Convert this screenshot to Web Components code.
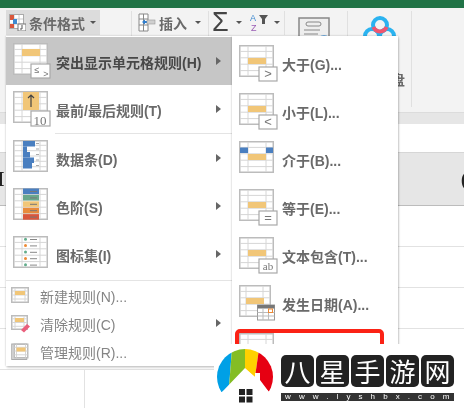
<!DOCTYPE html>
<html lang="zh">
<head>
<meta charset="utf-8">
<title>条件格式</title>
<style>
  html, body { margin: 0; padding: 0; background: #fff; overflow: hidden; }
  body { width: 464px; height: 408px; font-family: "Liberation Sans", "Noto Sans CJK SC", sans-serif; }
  x-menu.main { position: absolute; left: 6px; top: 36px; width: 226px; height: 330px; }
  x-menu.sub { position: absolute; left: 232px; top: 36px; width: 166px; height: 372px; padding-top: 3px; }
</style>
</head>
<body>
<x-app>
  <x-ribbon></x-ribbon>
  <x-sheet></x-sheet>
  <x-menu class="main">
    <x-menu-item active arrow><x-rule-icon slot="icon" kind="highlight"></x-rule-icon>突出显示单元格规则(H)</x-menu-item>
    <x-menu-item arrow><x-rule-icon slot="icon" kind="top"></x-rule-icon>最前/最后规则(T)</x-menu-item>
    <x-menu-sep></x-menu-sep>
    <x-menu-item arrow><x-rule-icon slot="icon" kind="bars"></x-rule-icon>数据条(D)</x-menu-item>
    <x-menu-item arrow><x-rule-icon slot="icon" kind="scale"></x-rule-icon>色阶(S)</x-menu-item>
    <x-menu-item arrow><x-rule-icon slot="icon" kind="dots"></x-rule-icon>图标集(I)</x-menu-item>
    <x-menu-sep wide></x-menu-sep>
    <x-menu-item small><x-rule-icon slot="icon" kind="new"></x-rule-icon>新建规则(N)...</x-menu-item>
    <x-menu-item small arrow><x-rule-icon slot="icon" kind="clear"></x-rule-icon>清除规则(C)</x-menu-item>
    <x-menu-item small><x-rule-icon slot="icon" kind="manage"></x-rule-icon>管理规则(R)...</x-menu-item>
  </x-menu>
  <x-menu class="sub">
    <x-menu-item sub><x-rule-icon slot="icon" kind="gt"></x-rule-icon>大于(G)...</x-menu-item>
    <x-menu-item sub><x-rule-icon slot="icon" kind="lt"></x-rule-icon>小于(L)...</x-menu-item>
    <x-menu-item sub><x-rule-icon slot="icon" kind="between"></x-rule-icon>介于(B)...</x-menu-item>
    <x-menu-item sub><x-rule-icon slot="icon" kind="eq"></x-rule-icon>等于(E)...</x-menu-item>
    <x-menu-item sub><x-rule-icon slot="icon" kind="ab"></x-rule-icon>文本包含(T)...</x-menu-item>
    <x-menu-item sub><x-rule-icon slot="icon" kind="date"></x-rule-icon>发生日期(A)...</x-menu-item>
    <x-menu-item sub><x-rule-icon slot="icon" kind="plain"></x-rule-icon></x-menu-item>
    <x-callout></x-callout>
  </x-menu>
  <x-watermark></x-watermark>
</x-app>

<script>
// table with the grey grid, every rule icon starts from this
function grid(w, h, c1, c2, rows) {
  let s = `<rect x=".75" y=".75" width="${w - 1.5}" height="${h - 1.5}" fill="#fff" stroke="#bcbcbc" stroke-width="1.5"/>`;
  s += `<path d="M${c1} 1V${h - 1}M${c2} 1V${h - 1}`;
  for (let i = 1; i < rows; i++) {
    const y = (h * i / rows).toFixed(1);
    s += `M1 ${y}H${w - 1}`;
  }
  return s + `" stroke="#d6d6d6" stroke-width="1" fill="none"/>`;
}
function badge(inner, x = 20, y = 22, w = 18, h = 14) {
  return `<rect x="${x}" y="${y}" width="${w}" height="${h}" fill="#fff" stroke="#a8a8a8" stroke-width="1.2"/>${inner}`;
}
function mark(txt, size, x = 29, y = 33, fam = 'Liberation Sans') {
  return `<text x="${x}" y="${y}" font-size="${size}" font-weight="400" font-family="${fam}" text-anchor="middle" fill="#777">${txt}</text>`;
}
const YELLOW = '#f1c678';
const bigTable = () => grid(35, 32, 9, 27, 5);
const midCell = `<rect x="9" y="13" width="18" height="6" fill="${YELLOW}"/>`;

const ICONS = {
  highlight: () => grid(35, 32, 9, 27, 5) + `<rect x="9" y="6" width="18" height="7" fill="${YELLOW}"/>` + badge(mark('≤', 9, 24, 30) + mark('&gt;', 9, 33, 34), 18, 21, 19, 14),
  top: () => bigTable() + `<rect x="10" y="1" width="16" height="18" fill="${YELLOW}"/><path d="M18 16V4M15 7l3-3 3 3" stroke="#444" stroke-width="1.2" fill="none"/>` + badge(mark('10', 13, 27, 34, 'Liberation Serif'), 18, 20, 19, 15),
  bars: () => {
    let s = grid(35, 32, 9, 27, 6);
    [[12, 1], [4, 6.5], [7, 12], [11, 17.5], [9, 23]].forEach(b => {
      s += `<rect x="10" y="${b[1]}" width="${b[0]}" height="5.5" fill="#4a7fc0"/><rect x="23" y="${b[1] + 2}" width="3" height="1" fill="#aaa"/>`;
    });
    return s;
  },
  scale: () => {
    let s = grid(35, 32, 9, 27, 5);
    ['#4a7fc0', '#69a78b', '#f1c678', '#e88b3c', '#d9573c'].forEach((c, i) => {
      s += `<rect x="10" y="${i * 6.4 + .5}" width="16" height="5.6" fill="${c}"/><rect x="17" y="${i * 6.4 + 3}" width="7" height="1" fill="#777"/>`;
    });
    return s;
  },
  dots: () => {
    let s = grid(35, 32, 9, 27, 5);
    ['#63ad8c', '#ee8a35', '#63ad8c', '#ee8a35', '#63ad8c'].forEach((c, i) => {
      s += `<circle cx="12.5" cy="${i * 6.4 + 3.2}" r="1.5" fill="${c}"/><rect x="17" y="${i * 6.4 + 3}" width="7" height="1" fill="#888"/>`;
    });
    return s;
  },
  gt: () => grid(35, 32, 9, 27, 5) + midCell + badge(mark('&gt;', 13)),
  lt: () => grid(35, 32, 9, 27, 5) + midCell + badge(mark('&lt;', 13)),
  between: () => grid(35, 32, 9, 27, 5) + `<rect x="1" y="6.5" width="8" height="5.5" fill="#4a7fc0"/><rect x="27" y="6.5" width="7" height="5.5" fill="#4a7fc0"/>` + `<rect x="9" y="13" width="18" height="6" fill="${YELLOW}"/>`,
  eq: () => grid(35, 32, 9, 27, 5) + midCell + badge(mark('=', 13)),
  ab: () => grid(35, 32, 9, 27, 5) + midCell + badge(mark('ab', 11, 29, 33, 'Liberation Serif')),
  date: () => grid(32, 32, 7, 24, 5) + `<rect x="7" y="13" width="18" height="6" fill="${YELLOW}"/>` +
    `<rect x="18.5" y="20" width="17" height="15" fill="#fff" stroke="#999"/><rect x="18.5" y="20" width="17" height="3.5" fill="#777"/><path d="M18.5 27.5h17M18.5 31h17M24 23.5V35M29.5 23.5V35" stroke="#bbb" fill="none"/><rect x="29.5" y="24" width="4" height="3.5" fill="none" stroke="#ee8a35"/>`,
  plain: () => grid(35, 32, 9, 27, 5) + midCell,
  new: () => grid(18, 16, 4, 14, 4) + `<rect x="4" y="4" width="10" height="4" fill="${YELLOW}"/>`,
  clear: () => grid(17, 15, 4, 13, 4) + `<rect x="4" y="3" width="9" height="4" fill="${YELLOW}"/><path d="M10 15l6-6 3 2.500-6 6z" fill="#ea5f7c"/>`,
  manage: () => `<rect x=".75" y="1" width="15" height="15.500" fill="#ddd" stroke="#aaa"/>` + `<g transform="translate(2.500 .5)">` + grid(15, 15, 3, 12, 4) + `<rect x="3" y="4" width="9" height="4" fill="${YELLOW}"/></g>`
};

class XApp extends HTMLElement {
  connectedCallback() {
    this.attachShadow({ mode: 'open' });
    this.shadowRoot.innerHTML = `
      <style>
        :host { display: block; position: relative; width: 464px; height: 408px; overflow: hidden; filter: blur(.6px); }
      </style>
      <slot></slot>`;
  }
}

class XRibbon extends HTMLElement {
  connectedCallback() {
    this.attachShadow({ mode: 'open' });
    this.shadowRoot.innerHTML = `
      <style>
        :host { display: block; height: 112px; background: #f3f3f3; color: #6a6a6a; font-size: 14px; font-weight: 700; box-sizing: border-box; border-top: 8px solid #217346; }
        .row { display: flex; align-items: flex-start; padding: 2px 0 0 6px; height: 100%; box-sizing: border-box; }
        .btn { display: flex; align-items: center; height: 25px; flex: none; }
        .cf { width: 94px; background: #dcdcdc; padding-left: 3px; box-sizing: border-box; }
        .cf span { margin-left: 3px; }
        .sep { width: 1px; height: 96px; background: #e0e0e0; margin-top: 1px; flex: none; }
        .caret { width: 0; height: 0; border: 3px solid transparent; border-top: 3.5px solid #555; border-bottom: 0; flex: none; }
        .col { flex: none; display: flex; flex-direction: column; }
        .clip { line-height: 14px; }
        .bar { width: 2px; height: 13px; background: #777; margin: 0 0 5px 5px; }
      </style>
      <div class="row">
        <div class="btn cf">
          <svg width="17" height="17" viewBox="0 0 17 17">
            <rect x=".5" y=".5" width="14" height="14" fill="#fff" stroke="#aaa"/>
            <path d="M5 1v13M10 1v13M1 5h13M1 10h13" stroke="#ccc" fill="none"/>
            <rect x="1" y="1" width="4" height="5" fill="#d9573c"/><rect x="4" y="5" width="4" height="5" fill="#3f8ad0"/><rect x="1" y="10" width="4" height="4" fill="#d9573c"/>
            <rect x="9" y="10" width="8" height="7" fill="#fff" stroke="#777"/><path d="M13 11v4h-2" stroke="#555" fill="none"/>
          </svg>
          <span>条件格式</span>
          <div class="caret" style="margin-left:5px"></div>
        </div>
        <div class="sep" style="margin-left:31px"></div>
        <div class="btn" style="margin-left:6px;width:70px">
          <svg width="18" height="19" viewBox="0 0 18 19">
            <path d="M1 1h9v17H1zM1 6h9M1 12h9M5.500 1v17" stroke="#888" fill="#fff"/>
            <path d="M6 9h3" stroke="#2f7fd0" stroke-width="2"/><path d="M4 9l3-2.500v5z" fill="#2f7fd0"/>
            <rect x="9" y="7" width="8" height="4" fill="#cfcfcf" stroke="#999" stroke-width=".6"/>
          </svg>
          <span style="margin-left:3px">插入</span>
          <div class="caret" style="margin-left:8px"></div>
        </div>
        <div class="sep"></div>
        <div class="btn" style="margin-left:3px;width:36px">
          <span style="font:400 27px 'Liberation Sans',sans-serif;color:#444">Σ</span>
          <div class="caret" style="margin-left:7px"></div>
        </div>
        <div class="btn" style="margin-left:2px;width:32px">
          <svg width="22" height="22" viewBox="0 0 22 22">
            <text x="0" y="9" font-size="9" font-weight="400" font-family="Liberation Sans" fill="#3f8ad0">A</text>
            <text x="1" y="19" font-size="9" font-weight="400" font-family="Liberation Sans" fill="#9a5db5">Z</text>
            <path d="M9 3h9l-3 4v5h-3V7z" fill="#555"/>
          </svg>
          <div class="caret" style="margin-left:2px"></div>
        </div>
        <div class="sep" style="margin-left:2px;height:24px"></div>
        <svg width="34" height="28" viewBox="0 0 34 28" style="margin:7px 0 0 13px;flex:none">
          <rect x="1" y="1" width="30" height="26" fill="#eee" stroke="#888" stroke-width="1.500"/>
          <rect x="8" y="5" width="15" height="4" rx="2" fill="none" stroke="#888"/>
          <path d="M6 13h16M6 17h14M6 21h14" stroke="#888"/>
          <circle cx="26" cy="25" r="7" fill="#6ea9dc"/>
        </svg>
        <div class="sep" style="margin-left:15px"></div>
        <svg width="36" height="30" viewBox="0 0 36 30" style="margin:5px 0 0 14px;flex:none">
          <circle cx="10" cy="21" r="7" fill="none" stroke="#2bb3f0" stroke-width="4"/>
          <circle cx="25" cy="21" r="7" fill="none" stroke="#2bb3f0" stroke-width="4"/>
          <circle cx="18" cy="10" r="7" fill="none" stroke="#2bb3f0" stroke-width="4"/>
          <path d="M11.500 12a7 7 0 0 0 13 0" fill="none" stroke="#f0566f" stroke-width="4"/>
        </svg>
        <div class="col clip" style="margin-left:-7px;width:23px;padding-top:45px">
          <div class="bar"></div>
          <span>盘</span>
        </div>
        <div class="sep" style="margin-left:-3px"></div>
      </div>`;
  }
}

class XSheet extends HTMLElement {
  connectedCallback() {
    this.attachShadow({ mode: 'open' });
    this.shadowRoot.innerHTML = `
      <style>
        :host { display: block; height: 296px; background: #fff; }
        .strip { height: 12px; background: #e6e6e6; border-top: 1px solid #dcdcdc; box-sizing: border-box; }
        .gap { height: 28px; }
        .head { height: 54px; background: #e6e6e6; border-top: 1px solid #d6d6d6; border-bottom: 1.500px solid #bcbcbc; box-sizing: border-box; display: flex; justify-content: space-between; align-items: center; color: #222; font: 700 22px "Liberation Serif", serif; overflow: hidden; }
        .head span { display: block; }
        .row { height: 41px; border-bottom: 1px solid #e2e2e2; box-sizing: border-box; }
        .cols { height: 38px; display: flex; }
        .cols div { width: 84px; height: 100%; border-right: 1.500px solid #e2e2e2; }
      </style>
      <div class="strip"></div>
      <div class="gap"></div>
      <div class="head"><span style="margin-left:-4px">I</span><span style="margin-right:-4px">(</span></div>
      <div class="row"></div>
      <div class="row"></div>
      <div class="row"></div>
      <div class="row"></div>
      <div class="cols"><div></div></div>`;
  }
}

class XMenu extends HTMLElement {
  connectedCallback() {
    this.attachShadow({ mode: 'open' });
    this.shadowRoot.innerHTML = `
      <style>
        :host { display: block; box-sizing: border-box; background: #fff; box-shadow: 0 0 2px rgba(0,0,0,.25), 1px 2px 2px rgba(0,0,0,.14); padding-top: 1px; }
      </style>
      <slot></slot>`;
  }
}

class XMenuItem extends HTMLElement {
  connectedCallback() {
    const small = this.hasAttribute('small');
    const sub = this.hasAttribute('sub');
    const active = this.hasAttribute('active');
    this.attachShadow({ mode: 'open' });
    this.shadowRoot.innerHTML = `
      <style>
        :host { display: flex; align-items: center; height: ${small ? 28 : 48}px; box-sizing: border-box; position: relative;
          padding-left: ${small ? 5 : 7}px; background: ${active ? '#c6c6c6' : 'transparent'};
          color: ${small ? '#858585' : active ? '#484848' : '#6a6a6a'}; font-size: 14px; font-weight: ${small ? 400 : 700}; white-space: nowrap; }
        .ic { display: flex; align-items: center; flex: none; width: ${small ? 29 : 43}px; line-height: 0; }
        .tx { flex: 1; padding-top: ${small || sub ? 1 : 2}px; }
        .ar { width: 0; height: 0; border: 4px solid transparent; border-left: 5px solid #666; border-right: 0; margin-right: 11px; flex: none; }
      </style>
      <span class="ic"><slot name="icon"></slot></span>
      <span class="tx"><slot></slot></span>
      ${this.hasAttribute('arrow') ? '<span class="ar"></span>' : ''}`;
  }
}

class XMenuSep extends HTMLElement {
  connectedCallback() {
    const wide = this.hasAttribute('wide');
    this.attachShadow({ mode: 'open' });
    this.shadowRoot.innerHTML = `
      <style>
        :host { display: block; height: 1px; background: #e4e4e4; margin: ${wide ? '2px 0 0 0' : '0 0 0 49px'}; }
      </style>`;
  }
}

class XRuleIcon extends HTMLElement {
  connectedCallback() {
    const kind = this.getAttribute('kind');
    const small = ['new', 'clear', 'manage'].includes(kind);
    const w = small ? 20 : 38, h = small ? 17 : 36;
    this.attachShadow({ mode: 'open' });
    this.shadowRoot.innerHTML = `
      <style>:host { display: block; width: ${w}px; height: ${h}px; } svg { display: block; overflow: visible; }</style>
      <svg width="${w}" height="${h}" viewBox="0 0 ${w} ${h}">${ICONS[kind]()}</svg>`;
  }
}

class XCallout extends HTMLElement {
  connectedCallback() {
    this.attachShadow({ mode: 'open' });
    this.shadowRoot.innerHTML = `
      <style>
        :host { display: block; position: absolute; left: 3px; top: 293px; width: 149px; height: 60px; box-sizing: border-box; border: 4px solid #fb2215; border-radius: 5px; }
      </style>`;
  }
}

class XWatermark extends HTMLElement {
  connectedCallback() {
    const tiles = ['八', '星', '手', '游', '网'].map(c => `<span class="tile">${c}</span>`).join('');
    this.attachShadow({ mode: 'open' });
    this.shadowRoot.innerHTML = `
      <style>
        :host { display: flex; position: absolute; left: 214px; top: 344px; width: 250px; height: 64px; background: #fff; box-sizing: border-box; padding: 5px 0 0 3px; }
        svg { flex: none; display: block; }
        .brand { margin: 6px 0 0 6px; width: 173px; }
        .tiles { display: flex; gap: 2px; }
        .tile { width: 33px; height: 32px; background: #222; color: #fff; border-radius: 5px; display: flex; align-items: center; justify-content: center; font: 400 26px/32px "Noto Sans CJK SC", sans-serif; }
        .url { margin-top: 6px; height: 8px; background: #333; color: #fff; font: 400 8px/8px "Liberation Sans", sans-serif; letter-spacing: 8.100px; padding-left: 4px; white-space: nowrap; }
      </style>
      <svg width="58" height="56" viewBox="0 0 58 56">
        <clipPath id="fan"><circle cx="28" cy="28" r="28"/></clipPath>
        <g clip-path="url(#fan)">
          <polygon points="-2,0 15,0 12,38 5,43 -2,43" fill="#00a0e6"/>
          <polygon points="15,0 28,0 28,20 12,38" fill="#84bd24"/>
          <polygon points="28,0 42,0 38,28 28,20" fill="#ffd000"/>
          <polygon points="42,0 60,0 60,43 52,43 38,28" fill="#e60012"/>
        </g>
        <polygon points="5,43 28,19 38,28 38,24 43,24 43,31 52,43 52,56 5,56" fill="#fff"/>
        <path d="M22 40h6v6h-6zM29.500 40h6v6h-6zM22 47.500h6v6h-6zM29.500 47.500h6v6h-6z" fill="#222"/>
      </svg>
      <div class="brand">
        <div class="tiles">${tiles}</div>
        <div class="url">www.lyshbx.com</div>
      </div>`;
  }
}

customElements.define('x-app', XApp);
customElements.define('x-ribbon', XRibbon);
customElements.define('x-sheet', XSheet);
customElements.define('x-menu', XMenu);
customElements.define('x-menu-item', XMenuItem);
customElements.define('x-menu-sep', XMenuSep);
customElements.define('x-rule-icon', XRuleIcon);
customElements.define('x-callout', XCallout);
customElements.define('x-watermark', XWatermark);
</script>
</body>
</html>
